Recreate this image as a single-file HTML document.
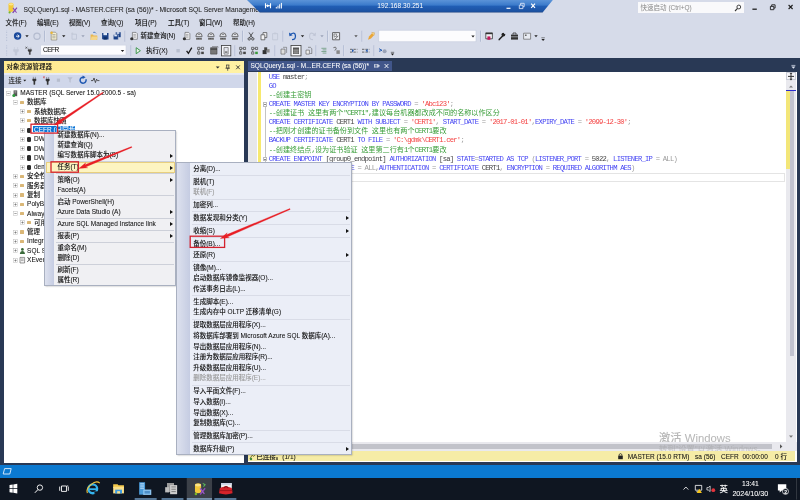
<!DOCTYPE html>
<html lang="zh-CN">
<head>
<meta charset="utf-8">
<title>SQLQuery1.sql - MASTER.CEFR (sa (56))* - Microsoft SQL Server Management Studio</title>
<style>
html,body{margin:0;padding:0}
body{width:800px;height:500px;overflow:hidden;background:#293955;position:relative;
 font-family:"Liberation Sans","Noto Sans CJK SC",sans-serif;font-size:6.5px;font-weight:500;color:#111}
div,span,svg{position:absolute;box-sizing:border-box}
#root{left:0;top:0;width:800px;height:500px;overflow:hidden;will-change:transform}
.t{white-space:nowrap;height:10px;line-height:10px;-webkit-text-stroke:0.06px}
.t span,.code span{position:static}
#chrome{left:0;top:0;width:800px;height:58px;background:#d6dbe9}
#oe{left:4px;top:61px;width:240px;height:401.5px;background:#fff}
#oehead{left:0;top:0;width:240px;height:11.5px;background:linear-gradient(90deg,#ffe98f,#fff09c 60%,#fff2a4)}
#oetb{left:0;top:11.5px;width:240px;height:15px;background:linear-gradient(180deg,#e6eaf5 0,#e6eaf5 1.4px,#d0d7ea 2.2px,#d0d7ea 100%)}
.tr{left:0;height:9.28px;width:240px}
.tr .t{top:-0.4px}
.fold{width:4px;height:3.2px;background:#dab777;border-radius:.5px}
.db{width:4.4px;height:5.2px;background:#2b2b2b;border-radius:1.6px/1px}
.menu{border:0.6px solid #a9b0c0;box-shadow:1.2px 1.2px 1.6px rgba(0,0,0,.28)}
.gut{left:0;top:0;bottom:0}
.ms{left:0;right:1px;height:0.7px;background:#d9dce7}
.arr{width:0;height:0;margin-top:-0.1px;margin-left:-0.8px;border-top:2.3px solid transparent;border-bottom:2.3px solid transparent;border-left:3px solid #111}
.dis{color:#9a9a9a}
.code{left:21.25px;white-space:pre;font-weight:400;font-family:"Liberation Mono","Noto Sans CJK SC",monospace;font-size:7.2px;letter-spacing:-0.765px;height:9.13px;line-height:9.13px;color:#222;opacity:.85}
.code .c{line-height:0;letter-spacing:0;font-size:7.11px;font-family:"Noto Sans CJK SC",sans-serif}
.k{color:#1c1cf0}.s{color:#f21a1a}.g{color:#8a8a8a}.cm{color:#168c16}
</style>
</head>
<body>
<div id="root">
<div id="chrome">
<svg style="left:6.5px;top:2px" width="11" height="12" viewBox="0 0 11 12"><path d="M1.5 2.2Q1.5.8 4 .8T6.5 2.2V8.6Q6.5 10 4 10T1.5 8.6Z" fill="#f2c83a"/><ellipse cx="4" cy="2.3" rx="2.5" ry="1.1" fill="#fbe38a"/><path d="M5.2 10.6 9.6 5.2 10.4 6 6.2 11.2Z" fill="#7d3fa8"/><path d="M6.4 5.6 10 10.4 9.2 11 5.6 6.4Z" fill="#8c4bb8"/><circle cx="2.6" cy="10.4" r="1.1" fill="#78b82a"/></svg>
<div class="t" style="left:23.6px;top:4.6px;font-size:6.72px;color:#1e1e1e">SQLQuery1.sql - MASTER.CEFR (sa (56))* - Microsoft SQL Server Management Studio</div>
<svg style="left:246px;top:0" width="312" height="14" viewBox="0 0 312 14"><defs><linearGradient id="rg" x1="0" y1="0" x2="0" y2="1"><stop offset="0" stop-color="#5b93d8"/><stop offset=".4" stop-color="#3b7bcb"/><stop offset=".5" stop-color="#215eb4"/><stop offset=".9" stop-color="#1c52a2"/><stop offset="1" stop-color="#1a3f7c"/></linearGradient></defs><path d="M1 0H306.8L296.6 12.6H13.8Z" fill="url(#rg)"/>
<path d="M19.5 3.2v5M24.5 3.2v5M19.5 5.7h5" stroke="#fff" stroke-width="1.1" fill="none"/><path d="M21 4.2l2.4 1.5L21 7.2Z" fill="#fff"/>
<path d="M30.3 8.5v-1.6M32 8.5v-2.8M33.7 8.5v-4.2M35.4 8.5v-5.6" stroke="#fff" stroke-width="1" fill="none"/>
<path d="M260.5 8.3h4" stroke="#fff" stroke-width="1.2"/><path d="M273.3 5.2h3.6v3.4h-3.6zM274.6 5v-1.7h3.6v3.4h-1.2" stroke="#e8eefb" stroke-width=".8" fill="none"/><path d="M285.2 3.6l3.8 4.2M289 3.6l-3.8 4.2" stroke="#fff" stroke-width="1.2"/>
<text x="131.3" y="8.2" font-family="Liberation Sans, sans-serif" font-size="6.6" fill="#fff">192.168.30.251</text></svg>
<div style="left:637.5px;top:2px;width:106.4px;height:11.2px;background:#f9f9fb"></div>
<div class="t" style="left:640.6px;top:2.7px;color:#8a8a8a;font-weight:400;-webkit-text-stroke:0">快速启动 (Ctrl+Q)</div>
<svg style="left:734px;top:3.5px" width="8" height="8" viewBox="0 0 8 8"><circle cx="4.8" cy="3" r="1.9" fill="none" stroke="#333" stroke-width=".9"/><path d="M3.5 4.4 1 7" stroke="#333" stroke-width="1.1"/></svg>
<svg style="left:750px;top:3px" width="46" height="10" viewBox="0 0 46 10"><path d="M2.4 6.2h4.4" stroke="#1e1e1e" stroke-width="1.3"/><path d="M20.4 3.4h3.4v3.3h-3.4zM21.7 3.2V1.8h3.4v3.3h-1.1" stroke="#1e1e1e" stroke-width=".9" fill="none"/><path d="M38.6 2l4 4M42.6 2l-4 4" stroke="#1e1e1e" stroke-width="1.1"/></svg>
<div class="t" style="left:5.4px;top:17.7px">文件(F)</div>
<div class="t" style="left:37px;top:17.7px">编辑(E)</div>
<div class="t" style="left:68.8px;top:17.7px">视图(V)</div>
<div class="t" style="left:101px;top:17.7px">查询(Q)</div>
<div class="t" style="left:135px;top:17.7px">项目(P)</div>
<div class="t" style="left:168px;top:17.7px">工具(T)</div>
<div class="t" style="left:199px;top:17.7px">窗口(W)</div>
<div class="t" style="left:233px;top:17.7px">帮助(H)</div>
<svg style="left:0;top:0" width="800" height="58" viewBox="0 0 800 58">
<path d="M6.6 30.70v11" stroke="#9aa6c4" stroke-width="1.2" stroke-dasharray=".6 1" opacity=".55"/>
<circle cx="17.6" cy="36.0" r="3.7" fill="#1b4a9c"/><path d="M16 36.2h3M17.6 34.6l1.7 1.6-1.7 1.6" stroke="#fff" stroke-width=".9" fill="none"/>
<path d="M25.30 35.30h3.4l-1.7 2z" fill="#222"/>
<circle cx="37" cy="36.2" r="3.1" fill="none" stroke="#b4bccf" stroke-width="1.2"/>
<path d="M44.5 30.70v11" stroke="#8d9abb" stroke-width=".7" opacity=".8"/><path d="M45.20 30.70v11" stroke="#fff" stroke-width=".5" opacity=".6"/>
<path d="M51.2 32.2h4.2l1.4 1.4v6.4h-5.6z" fill="#f6f1d6" stroke="#7b7665" stroke-width=".6"/><path d="M52.3 34.6h3.2M52.3 36.2h3.2M52.3 37.800000000000004h3.2" stroke="#6b6a60" stroke-width=".5"/><circle cx="51.6" cy="32.800000000000004" r="1.3" fill="#e9b535"/>
<path d="M62.05 35.30h3.4l-1.7 2z" fill="#222"/>
<path d="M72 34.2h4.5v5H72z" fill="none" stroke="#bcc3d4" stroke-width=".8"/><circle cx="72.3" cy="33.6" r="1.1" fill="#c5cbd9"/>
<path d="M81.30 35.30h3.4l-1.7 2z" fill="#9aa2b6"/>
<path d="M90.6 34.6h2.2l.8.9h3.6v4.4h-6.6z" fill="#e9b74e"/><path d="M91.6 36.6h6.2l-1.2 3.3h-6z" fill="#f5d68a"/><path d="M93.2 32.400000000000006q2-.8 2.8 1" stroke="#2a63b5" stroke-width=".8" fill="none"/>
<g transform="translate(.8 0)"><path d="M101.3 32.900000000000006h6.4v6.6h-5.6l-.8-.8z" fill="#1a4188"/><path d="M102.6 32.900000000000006h3.6v2.3h-3.6z" fill="#dfe8f6"/><path d="M103 37.2h3v2.3h-3z" fill="#0d2f66"/></g>
<g transform="translate(1.3 0)"><path d="M114.4 32.2h5v5h-5z" fill="#1a4188"/><path d="M115.4 32.2h2.6v1.6h-2.6z" fill="#dfe8f6"/><path d="M112 34.800000000000004h5v5h-4.3l-.7-.7z" fill="#1a4188" stroke="#d6dbe9" stroke-width=".5"/><path d="M113 34.800000000000004h2.6v1.6H113z" fill="#dfe8f6"/></g>
<path d="M125 30.70v11" stroke="#8d9abb" stroke-width=".7" opacity=".8"/><path d="M125.70 30.70v11" stroke="#fff" stroke-width=".5" opacity=".6"/>
<path d="M132.4 32.400000000000006h3.6l1.3 1.3v5.6h-4.9z" fill="#f4f4f6" stroke="#555" stroke-width=".6"/><path d="M133.3 34.400000000000006h2.6M133.3 35.800000000000004h2.6M133.3 37.2h2.6" stroke="#666" stroke-width=".5"/><ellipse cx="131.8" cy="38.800000000000004" rx="1.6" ry="1.5" fill="#333"/>
<path d="M185.0 32.400000000000006h3.6l1.3 1.3v5.6h-4.9z" fill="#f4f4f6" stroke="#555" stroke-width=".6"/><path d="M185.9 34.400000000000006h2.6M185.9 35.800000000000004h2.6M185.9 37.2h2.6" stroke="#666" stroke-width=".5"/><ellipse cx="184.4" cy="38.800000000000004" rx="1.6" ry="1.5" fill="#333"/>
<path d="M195.8 36.400000000000006q.2-3.6 3.2-3.6t3.2 3.6z" fill="#eef0f6" stroke="#4a4a4a" stroke-width=".75"/><path d="M197.7 34.400000000000006h2.6" stroke="#555" stroke-width=".7"/><path d="M196 37.6h6v2.2h-6z" fill="#8a8a8a"/><path d="M196.6 38.7h4.8" stroke="#3a3a3a" stroke-width=".9" stroke-dasharray="1 .5"/>
<path d="M207.8 36.400000000000006q.2-3.6 3.2-3.6t3.2 3.6z" fill="#eef0f6" stroke="#4a4a4a" stroke-width=".75"/><path d="M209.7 34.400000000000006h2.6" stroke="#555" stroke-width=".7"/><path d="M208 37.6h6v2.2h-6z" fill="#8a8a8a"/><path d="M208.6 38.7h4.8" stroke="#3a3a3a" stroke-width=".9" stroke-dasharray="1 .5"/>
<path d="M219.8 36.400000000000006q.2-3.6 3.2-3.6t3.2 3.6z" fill="#eef0f6" stroke="#4a4a4a" stroke-width=".75"/><path d="M221.7 34.400000000000006h2.6" stroke="#555" stroke-width=".7"/><path d="M220 37.6h6v2.2h-6z" fill="#8a8a8a"/><path d="M220.6 38.7h4.8" stroke="#3a3a3a" stroke-width=".9" stroke-dasharray="1 .5"/>
<path d="M231.8 36.400000000000006q.2-3.6 3.2-3.6t3.2 3.6z" fill="#eef0f6" stroke="#4a4a4a" stroke-width=".75"/><path d="M233.7 34.400000000000006h2.6" stroke="#555" stroke-width=".7"/><path d="M232 37.6h6v2.2h-6z" fill="#8a8a8a"/><path d="M232.6 38.7h4.8" stroke="#3a3a3a" stroke-width=".9" stroke-dasharray="1 .5"/>
<path d="M242.5 30.70v11" stroke="#8d9abb" stroke-width=".7" opacity=".8"/><path d="M243.20 30.70v11" stroke="#fff" stroke-width=".5" opacity=".6"/>
<path d="M249 32.400000000000006l3.6 5.6M253 32.400000000000006l-3.6 5.6" stroke="#333" stroke-width=".8"/><circle cx="249.2" cy="38.900000000000006" r="1.2" fill="none" stroke="#333" stroke-width=".8"/><circle cx="252.8" cy="38.900000000000006" r="1.2" fill="none" stroke="#333" stroke-width=".8"/>
<path d="M263 32.6h3.8v5h-3.8z" fill="#f4f4f6" stroke="#444" stroke-width=".7"/><path d="M261 34.800000000000004h3.8v5H261z" fill="#f4f4f6" stroke="#444" stroke-width=".7"/>
<path d="M272.6 33.6h5v6.2h-5z" fill="none" stroke="#bfc5d4" stroke-width=".8"/><path d="M274 32.6h2.2v1.6H274z" fill="#c5cbd9"/>
<path d="M283 30.70v11" stroke="#8d9abb" stroke-width=".7" opacity=".8"/><path d="M283.70 30.70v11" stroke="#fff" stroke-width=".5" opacity=".6"/>
<path d="M290.2 34.6q4.6-3.4 5.2 .8t-3.4 4.2" fill="none" stroke="#1e57b0" stroke-width="1.3"/><path d="M289 32.6l.4 3.6 3.3-.9z" fill="#1e57b0"/>
<path d="M300.80 35.30h3.4l-1.7 2z" fill="#222"/>
<path d="M314.8 34.6q-4.6-3.4-5.2 .8t3.4 4.2" fill="none" stroke="#c0c6d6" stroke-width="1.1"/><path d="M316 32.6l-.4 3.6-3.3-.9z" fill="#c0c6d6"/>
<path d="M320.30 35.30h3.4l-1.7 2z" fill="#9aa2b6"/>
<path d="M327.5 30.70v11" stroke="#8d9abb" stroke-width=".7" opacity=".8"/><path d="M328.20 30.70v11" stroke="#fff" stroke-width=".5" opacity=".6"/>
<path d="M332.6 32.6h7v7.2h-7z" fill="#eceef4" stroke="#444" stroke-width=".8"/><path d="M334 34.0h2.6v2.4H334z" fill="none" stroke="#555" stroke-width=".6"/><path d="M334.4 37.6l1.2 1.2 2.6-3" fill="none" stroke="#444" stroke-width=".7"/>
<path d="M354.30 35.30h3.4l-1.7 2z" fill="#555"/>
<path d="M362 30.70v11" stroke="#8d9abb" stroke-width=".7" opacity=".8"/><path d="M362.70 30.70v11" stroke="#fff" stroke-width=".5" opacity=".6"/>
<path d="M368 39.800000000000004l1-3.4 3.4-3.6 2 2-3.4 3.6z" fill="#e9a63a"/><path d="M371.5 32.400000000000006l3 .4-.6 2.8" fill="#f5d68a" stroke="#c98a26" stroke-width=".4"/>
<rect x="378.8" y="30.200000000000003" width="97.2" height="11.6" fill="#fcfcfe" stroke="#c4cbdc" stroke-width=".6"/>
<path d="M471.30 35.50h3.4l-1.7 2z" fill="#222"/>
<path d="M480.5 30.70v11" stroke="#8d9abb" stroke-width=".7" opacity=".8"/><path d="M481.20 30.70v11" stroke="#fff" stroke-width=".5" opacity=".6"/>
<path d="M485.8 32.800000000000004h6.6v6h-6.6z" fill="#f2f2f5" stroke="#333" stroke-width=".8"/><path d="M485.8 33.6h6.6" stroke="#333" stroke-width="1.2"/><path d="M487.4 36.400000000000006h3v3.4h-3z" fill="#c2185b"/>
<path d="M499.2 39.6l3.4-3.6" stroke="#222" stroke-width="1.5" stroke-linecap="round"/><circle cx="503.4" cy="34.6" r="1.9" fill="#222"/><path d="M503.6 32.6l1.8 1.4" stroke="#d6dbe9" stroke-width="1"/>
<path d="M511 34.6h7v5h-7z" fill="#333"/><path d="M513 34.6v-1.6h3v1.6" fill="none" stroke="#333" stroke-width=".8"/><path d="M511 36.800000000000004h7" stroke="#d6dbe9" stroke-width=".6"/>
<path d="M523.6 33.2h7v6h-7z" fill="#e8ebf2" stroke="#666" stroke-width=".7"/><path d="M525 34.6h1.6v1.4H525z" fill="#666"/>
<path d="M534.30 35.30h3.4l-1.7 2z" fill="#222"/>
<path d="M541.4 37.800000000000004h3.4" stroke="#333" stroke-width=".6"/><path d="M541.40 38.90h3.4l-1.7 2z" fill="#222"/>
<path d="M6.6 45.20v11" stroke="#9aa6c4" stroke-width="1.2" stroke-dasharray=".6 1" opacity=".55"/>
<path d="M14.4 47.1v2.4M17.6 47.1v2.4M13.6 49.5h4.8v1.6l-1.6 1.6v2.4h-1.6v-2.4l-1.6-1.6z" fill="#c3c9d8" stroke="#c3c9d8" stroke-width=".6"/>
<path d="M28.8 47.7v2M30.8 47.7v2M28 49.5h3.6v1.4l-1.2 1.2v2.4h-1.2v-2.4l-1.2-1.2z" fill="#3a3a3a" stroke="#3a3a3a" stroke-width=".3"/><path d="M25.4 46.900000000000006l2 1.6M25.4 48.5l2-1.6" stroke="#333" stroke-width=".6"/>
<rect x="40.8" y="45.1" width="85.2" height="9.9" fill="#fcfcfe" stroke="#c9cfdf" stroke-width=".5"/>
<path d="M120.80 50.00h3.4l-1.7 2z" fill="#222"/>
<path d="M131 45.20v11" stroke="#8d9abb" stroke-width=".7" opacity=".8"/><path d="M131.70 45.20v11" stroke="#fff" stroke-width=".5" opacity=".6"/>
<path d="M136.2 47.7l4.2 3-4.2 3z" fill="#eaf4e6" stroke="#2f8f3f" stroke-width=".9" stroke-linejoin="round"/>
<rect x="176.4" y="49.0" width="3.4" height="3.4" fill="#b9c0d0"/>
<path d="M186.6 50.900000000000006l1.8 2.4 3.4-5.6" fill="none" stroke="#1b1b1b" stroke-width="1.3"/>
<path d="M197.6 47.300000000000004h2.2v2.2h-2.2zM201.4 47.300000000000004h2.2v2.2H201.4zM197.6 51.900000000000006h2.2v2.2h-2.2z" fill="none" stroke="#444" stroke-width=".7"/><path d="M199.79999999999998 48.400000000000006h1.6M198.7 49.5v2.4" stroke="#444" stroke-width=".6"/><path d="M201.2 51.7h2.6v2.4H201.2z" fill="#444"/>
<path d="M210.6 47.7h6.4v6.4h-6.4z" fill="#777" stroke="#444" stroke-width=".6"/><path d="M210.6 49.1h6.4" stroke="#333" stroke-width="1"/><path d="M212 46.7h6v1" stroke="#555" stroke-width=".6" fill="none"/>
<rect x="221.4" y="45.5" width="9.4" height="10.4" fill="#f6f7fb" stroke="#3a3a3a" stroke-width=".8"/><path d="M224 47.5h4.2v6.6H224z" fill="#e4e6ee" stroke="#555" stroke-width=".6"/><path d="M224.8 51.300000000000004h2.6v1.6h-2.6z" fill="#777"/>
<path d="M235 45.20v11" stroke="#8d9abb" stroke-width=".7" opacity=".8"/><path d="M235.70 45.20v11" stroke="#fff" stroke-width=".5" opacity=".6"/>
<path d="M239.6 47.300000000000004h2.2v2.2h-2.2zM243.4 47.300000000000004h2.2v2.2H243.4zM239.6 51.900000000000006h2.2v2.2h-2.2z" fill="none" stroke="#444" stroke-width=".7"/><path d="M241.79999999999998 48.400000000000006h1.6M240.7 49.5v2.4" stroke="#444" stroke-width=".6"/><path d="M243.2 51.7h2.6v2.4H243.2z" fill="#444"/>
<path d="M251.6 47.300000000000004h2.2v2.2h-2.2zM255.4 47.300000000000004h2.2v2.2H255.4zM251.6 51.900000000000006h2.2v2.2h-2.2z" fill="none" stroke="#444" stroke-width=".7"/><path d="M253.79999999999998 48.400000000000006h1.6M252.7 49.5v2.4" stroke="#444" stroke-width=".6"/><path d="M255.2 51.7h2.6v2.4H255.2z" fill="#3a9a3a"/>
<path d="M264.2 47.300000000000004h3v3h-3z" fill="#444"/><path d="M262.6 50.1h4v4h-4z" fill="#333"/><path d="M267 49.1h2.6v3.4H267z" fill="#888"/>
<path d="M275 45.20v11" stroke="#8d9abb" stroke-width=".7" opacity=".8"/><path d="M275.70 45.20v11" stroke="#fff" stroke-width=".5" opacity=".6"/>
<path d="M281 49.1h4v5h-4z" fill="#ddd" stroke="#555" stroke-width=".6"/><path d="M283 47.300000000000004h3.6v5.6" fill="none" stroke="#666" stroke-width=".6"/>
<rect x="291" y="45.5" width="10" height="10.4" fill="#f6f7fb" stroke="#3a3a3a" stroke-width=".8"/><path d="M293 47.5h6v6.4h-6z" fill="#555"/><path d="M293 50.1h6M293 52.1h6M295 49.300000000000004v4.6M297 49.300000000000004v4.6" stroke="#ddd" stroke-width=".4"/>
<path d="M306 50.1h3.4v4H306z" fill="#eee" stroke="#555" stroke-width=".6"/><path d="M308 47.300000000000004h2.4l1.4 1.4v4.8h-1.6" fill="none" stroke="#555" stroke-width=".6"/>
<path d="M316 45.20v11" stroke="#8d9abb" stroke-width=".7" opacity=".8"/><path d="M316.70 45.20v11" stroke="#fff" stroke-width=".5" opacity=".6"/>
<path d="M321.4 48.300000000000004h5M322.6 49.900000000000006h3.8M321.4 51.5h5M322.6 53.1h3.8" stroke="#6c9a7c" stroke-width=".8"/>
<path d="M333.4 47.7q2.6-1.4 2.8.4t-1.6 2.2" fill="none" stroke="#555" stroke-width=".8"/><path d="M336.4 50.300000000000004h3.4v3.6h-3.4z" fill="#888"/>
<path d="M343.8 45.20v11" stroke="#8d9abb" stroke-width=".7" opacity=".8"/><path d="M344.50 45.20v11" stroke="#fff" stroke-width=".5" opacity=".6"/>
<path d="M350 49.300000000000004h7.4M350 52.1h7.4" stroke="#333" stroke-width=".7" stroke-dasharray="2.4 1"/><path d="M352 49.1l2 1.6-2 1.6z" fill="#1e57b0"/>
<path d="M362 49.300000000000004h7.4M362 52.1h7.4" stroke="#333" stroke-width=".7" stroke-dasharray="2.4 1"/><path d="M367.6 49.1l-2 1.6 2 1.6z" fill="#1e57b0"/>
<path d="M374 45.20v11" stroke="#8d9abb" stroke-width=".7" opacity=".8"/><path d="M374.70 45.20v11" stroke="#fff" stroke-width=".5" opacity=".6"/>
<path d="M379 48.7l3 1.6M379 51.300000000000004l3-1" stroke="#1e57b0" stroke-width=".9"/><circle cx="384.6" cy="51.300000000000004" r="2" fill="#9aa3b8"/>
<path d="M390.8 52.300000000000004h3.4" stroke="#333" stroke-width=".6"/><path d="M390.80 53.40h3.4l-1.7 2z" fill="#222"/>
</svg>
<div class="t" style="left:140.4px;top:31.10px">新建查询(N)</div>
<div class="t" style="left:43px;top:45.30px;font-size:6.5px;letter-spacing:-.5px">CEFR</div>
<div class="t" style="left:146px;top:45.60px">执行(X)</div>
</div>
<div id="oe">
<div id="oehead"><div class="t" style="left:2.4px;top:1px">对象资源管理器</div>
<svg style="left:208.4px;top:1.6px" width="30" height="9" viewBox="0 0 30 9"><path d="M3.8 3.4h3.8l-1.9 2.2z" fill="#333"/><path d="M14 2h3.4M14.6 2v3.2h2.2V2M13.4 5.2h4.6M15.7 5.2v2.6" stroke="#333" stroke-width=".7" fill="none"/><path d="M24.2 2.4l3.6 3.8M27.8 2.4l-3.6 3.8" stroke="#333" stroke-width=".9"/></svg></div>
<div id="oetb"><div class="t" style="left:4.6px;top:3.3px;color:#2a2a2a">连接</div>
<svg style="left:0;top:0.9px" width="240" height="14.4" viewBox="0 0 240 14.4">
<path d="M19.2 6.8h3l-1.5 1.8z" fill="#222"/>
<path d="M29.3 3.8000000000000003v2.2M31.3 3.8000000000000003v2.2M28.6 5.9h3.4v1.5l-1.1 1.2v2.8h-1.2v-2.8l-1.1-1.2z" fill="#333" stroke="#333" stroke-width=".4"/>
<path d="M42.6 4.0v2.2M44.6 4.0v2.2M41.9 6.1h3.4v1.5l-1.1 1.2v2.8h-1.2v-2.8l-1.1-1.2z" fill="#333" stroke="#333" stroke-width=".4"/><path d="M39 3.4000000000000004l1.8 1.7M39 5.1l1.8-1.7" stroke="#c33" stroke-width=".6"/>
<rect x="52.8" y="5.6" width="3.2" height="3.2" fill="#b7bece"/>
<path d="M63.4 4.2h5.2l-2 2.6v3l-1.2-.8v-2.2z" fill="#b7bece"/>
<path d="M81.9 6.2a3 3 0 1 1-2.6-2" fill="none" stroke="#1e57b0" stroke-width="1.45"/><path d="M78.6 2.4000000000000004l3 1.9-3 1.8z" fill="#1e57b0"/>
<path d="M87 7.6000000000000005h2l1-2.6 1.4 4.6 1.2-3.4.8 1.4h2" fill="none" stroke="#333" stroke-width=".8"/>
</svg></div>
<div class="tr" style="top:27.36px">
<svg style="left:1.5px;top:2.15px" width="5" height="5" viewBox="0 0 5 5"><rect x=".5" y=".5" width="4" height="4" fill="#fff" stroke="#c2c2c2" stroke-width=".55"/><path d="M1.3 2.5h2.4" stroke="#5a5a5a" stroke-width=".55"/></svg>
<svg style="left:8.0px;top:1px" width="7" height="8" viewBox="0 0 7 8"><path d="M1.6 1.4h3.6v5.8H1.6z" fill="#555"/><path d="M2.4 2.6h2M2.4 3.8h2" stroke="#ddd" stroke-width=".5"/><circle cx="1.8" cy="6.4" r="1.5" fill="#2c9a3c"/></svg>
<div class="t" style="left:16.3px">MASTER (SQL Server 15.0.2000.5 - sa)</div>
</div>
<div class="tr" style="top:36.64px">
<svg style="left:8.5px;top:2.15px" width="5" height="5" viewBox="0 0 5 5"><rect x=".5" y=".5" width="4" height="4" fill="#fff" stroke="#c2c2c2" stroke-width=".55"/><path d="M1.3 2.5h2.4" stroke="#5a5a5a" stroke-width=".55"/></svg>
<div class="fold" style="left:15.7px;top:2.9px"></div>
<div class="t" style="left:23.1px">数据库</div>
</div>
<div class="tr" style="top:45.92px">
<svg style="left:15.5px;top:2.15px" width="5" height="5" viewBox="0 0 5 5"><rect x=".5" y=".5" width="4" height="4" fill="#fff" stroke="#c2c2c2" stroke-width=".55"/><path d="M1.3 2.5h2.4" stroke="#5a5a5a" stroke-width=".55"/><path d="M2.5 1.3v2.4" stroke="#5a5a5a" stroke-width=".55"/></svg>
<div class="fold" style="left:22.7px;top:2.9px"></div>
<div class="t" style="left:30.0px">系统数据库</div>
</div>
<div class="tr" style="top:55.20px">
<svg style="left:15.5px;top:2.15px" width="5" height="5" viewBox="0 0 5 5"><rect x=".5" y=".5" width="4" height="4" fill="#fff" stroke="#c2c2c2" stroke-width=".55"/><path d="M1.3 2.5h2.4" stroke="#5a5a5a" stroke-width=".55"/><path d="M2.5 1.3v2.4" stroke="#5a5a5a" stroke-width=".55"/></svg>
<div class="fold" style="left:22.7px;top:2.9px"></div>
<div class="t" style="left:30.0px">数据库快照</div>
</div>
<div class="tr" style="top:64.48px">
<svg style="left:15.5px;top:2.15px" width="5" height="5" viewBox="0 0 5 5"><rect x=".5" y=".5" width="4" height="4" fill="#fff" stroke="#c2c2c2" stroke-width=".55"/><path d="M1.3 2.5h2.4" stroke="#5a5a5a" stroke-width=".55"/><path d="M2.5 1.3v2.4" stroke="#5a5a5a" stroke-width=".55"/></svg>
<div class="db" style="left:22.8px;top:2.1px"></div>
<div style="left:28.8px;top:0.1px;width:42.2px;height:6.4px;background:#0a74d6"></div>
<div class="t" style="left:30.0px;color:#fff">CEFR (已同步)</div>
</div>
<div class="tr" style="top:73.76px">
<svg style="left:15.5px;top:2.15px" width="5" height="5" viewBox="0 0 5 5"><rect x=".5" y=".5" width="4" height="4" fill="#fff" stroke="#c2c2c2" stroke-width=".55"/><path d="M1.3 2.5h2.4" stroke="#5a5a5a" stroke-width=".55"/><path d="M2.5 1.3v2.4" stroke="#5a5a5a" stroke-width=".55"/></svg>
<div class="db" style="left:22.8px;top:2.1px"></div>
<div class="t" style="left:30.0px">DWConfiguration</div>
</div>
<div class="tr" style="top:83.04px">
<svg style="left:15.5px;top:2.15px" width="5" height="5" viewBox="0 0 5 5"><rect x=".5" y=".5" width="4" height="4" fill="#fff" stroke="#c2c2c2" stroke-width=".55"/><path d="M1.3 2.5h2.4" stroke="#5a5a5a" stroke-width=".55"/><path d="M2.5 1.3v2.4" stroke="#5a5a5a" stroke-width=".55"/></svg>
<div class="db" style="left:22.8px;top:2.1px"></div>
<div class="t" style="left:30.0px">DWDiagnostics</div>
</div>
<div class="tr" style="top:92.32px">
<svg style="left:15.5px;top:2.15px" width="5" height="5" viewBox="0 0 5 5"><rect x=".5" y=".5" width="4" height="4" fill="#fff" stroke="#c2c2c2" stroke-width=".55"/><path d="M1.3 2.5h2.4" stroke="#5a5a5a" stroke-width=".55"/><path d="M2.5 1.3v2.4" stroke="#5a5a5a" stroke-width=".55"/></svg>
<div class="db" style="left:22.8px;top:2.1px"></div>
<div class="t" style="left:30.0px">DWQueue</div>
</div>
<div class="tr" style="top:101.60px">
<svg style="left:15.5px;top:2.15px" width="5" height="5" viewBox="0 0 5 5"><rect x=".5" y=".5" width="4" height="4" fill="#fff" stroke="#c2c2c2" stroke-width=".55"/><path d="M1.3 2.5h2.4" stroke="#5a5a5a" stroke-width=".55"/><path d="M2.5 1.3v2.4" stroke="#5a5a5a" stroke-width=".55"/></svg>
<div class="db" style="left:22.8px;top:2.1px"></div>
<div class="t" style="left:30.0px">demo</div>
</div>
<div class="tr" style="top:110.88px">
<svg style="left:8.5px;top:2.15px" width="5" height="5" viewBox="0 0 5 5"><rect x=".5" y=".5" width="4" height="4" fill="#fff" stroke="#c2c2c2" stroke-width=".55"/><path d="M1.3 2.5h2.4" stroke="#5a5a5a" stroke-width=".55"/><path d="M2.5 1.3v2.4" stroke="#5a5a5a" stroke-width=".55"/></svg>
<div class="fold" style="left:15.7px;top:2.9px"></div>
<div class="t" style="left:23.1px">安全性</div>
</div>
<div class="tr" style="top:120.16px">
<svg style="left:8.5px;top:2.15px" width="5" height="5" viewBox="0 0 5 5"><rect x=".5" y=".5" width="4" height="4" fill="#fff" stroke="#c2c2c2" stroke-width=".55"/><path d="M1.3 2.5h2.4" stroke="#5a5a5a" stroke-width=".55"/><path d="M2.5 1.3v2.4" stroke="#5a5a5a" stroke-width=".55"/></svg>
<div class="fold" style="left:15.7px;top:2.9px"></div>
<div class="t" style="left:23.1px">服务器对象</div>
</div>
<div class="tr" style="top:129.44px">
<svg style="left:8.5px;top:2.15px" width="5" height="5" viewBox="0 0 5 5"><rect x=".5" y=".5" width="4" height="4" fill="#fff" stroke="#c2c2c2" stroke-width=".55"/><path d="M1.3 2.5h2.4" stroke="#5a5a5a" stroke-width=".55"/><path d="M2.5 1.3v2.4" stroke="#5a5a5a" stroke-width=".55"/></svg>
<div class="fold" style="left:15.7px;top:2.9px"></div>
<div class="t" style="left:23.1px">复制</div>
</div>
<div class="tr" style="top:138.72px">
<svg style="left:8.5px;top:2.15px" width="5" height="5" viewBox="0 0 5 5"><rect x=".5" y=".5" width="4" height="4" fill="#fff" stroke="#c2c2c2" stroke-width=".55"/><path d="M1.3 2.5h2.4" stroke="#5a5a5a" stroke-width=".55"/><path d="M2.5 1.3v2.4" stroke="#5a5a5a" stroke-width=".55"/></svg>
<div class="fold" style="left:15.7px;top:2.9px"></div>
<div class="t" style="left:23.1px">PolyBase</div>
</div>
<div class="tr" style="top:148.00px">
<svg style="left:8.5px;top:2.15px" width="5" height="5" viewBox="0 0 5 5"><rect x=".5" y=".5" width="4" height="4" fill="#fff" stroke="#c2c2c2" stroke-width=".55"/><path d="M1.3 2.5h2.4" stroke="#5a5a5a" stroke-width=".55"/></svg>
<div class="fold" style="left:15.7px;top:2.9px"></div>
<div class="t" style="left:23.1px">Always On 高可用性</div>
</div>
<div class="tr" style="top:157.28px">
<svg style="left:15.5px;top:2.15px" width="5" height="5" viewBox="0 0 5 5"><rect x=".5" y=".5" width="4" height="4" fill="#fff" stroke="#c2c2c2" stroke-width=".55"/><path d="M1.3 2.5h2.4" stroke="#5a5a5a" stroke-width=".55"/><path d="M2.5 1.3v2.4" stroke="#5a5a5a" stroke-width=".55"/></svg>
<div class="fold" style="left:22.7px;top:2.9px"></div>
<div class="t" style="left:30.0px">可用性组</div>
</div>
<div class="tr" style="top:166.56px">
<svg style="left:8.5px;top:2.15px" width="5" height="5" viewBox="0 0 5 5"><rect x=".5" y=".5" width="4" height="4" fill="#fff" stroke="#c2c2c2" stroke-width=".55"/><path d="M1.3 2.5h2.4" stroke="#5a5a5a" stroke-width=".55"/><path d="M2.5 1.3v2.4" stroke="#5a5a5a" stroke-width=".55"/></svg>
<div class="fold" style="left:15.7px;top:2.9px"></div>
<div class="t" style="left:23.1px">管理</div>
</div>
<div class="tr" style="top:175.84px">
<svg style="left:8.5px;top:2.15px" width="5" height="5" viewBox="0 0 5 5"><rect x=".5" y=".5" width="4" height="4" fill="#fff" stroke="#c2c2c2" stroke-width=".55"/><path d="M1.3 2.5h2.4" stroke="#5a5a5a" stroke-width=".55"/><path d="M2.5 1.3v2.4" stroke="#5a5a5a" stroke-width=".55"/></svg>
<div class="fold" style="left:15.7px;top:2.9px"></div>
<div class="t" style="left:23.1px">Integration Services 目录</div>
</div>
<div class="tr" style="top:185.12px">
<svg style="left:8.5px;top:2.15px" width="5" height="5" viewBox="0 0 5 5"><rect x=".5" y=".5" width="4" height="4" fill="#fff" stroke="#c2c2c2" stroke-width=".55"/><path d="M1.3 2.5h2.4" stroke="#5a5a5a" stroke-width=".55"/><path d="M2.5 1.3v2.4" stroke="#5a5a5a" stroke-width=".55"/></svg>
<svg style="left:15.0px;top:1px" width="7" height="8" viewBox="0 0 7 8"><circle cx="3.4" cy="2.4" r="1.4" fill="#3a6a3a"/><path d="M.8 7q.4-3 2.6-3t2.6 3z" fill="#3a6a3a"/></svg>
<div class="t" style="left:23.1px">SQL Server 代理</div>
</div>
<div class="tr" style="top:194.40px">
<svg style="left:8.5px;top:2.15px" width="5" height="5" viewBox="0 0 5 5"><rect x=".5" y=".5" width="4" height="4" fill="#fff" stroke="#c2c2c2" stroke-width=".55"/><path d="M1.3 2.5h2.4" stroke="#5a5a5a" stroke-width=".55"/><path d="M2.5 1.3v2.4" stroke="#5a5a5a" stroke-width=".55"/></svg>
<svg style="left:15.0px;top:1px" width="7" height="8" viewBox="0 0 7 8"><path d="M1 1.4h4.6v5.6H1z" fill="#f2f2f2" stroke="#555" stroke-width=".6"/><path d="M2 3h2.6M2 4.4h2.6" stroke="#666" stroke-width=".5"/></svg>
<div class="t" style="left:23.1px">XEvent 探查器</div>
</div>
</div>
<div style="left:247.6px;top:61.25px;width:144px;height:9.9px;background:#41568a"></div>
<div class="t" style="left:250.5px;top:61px;color:#fff">SQLQuery1.sql - M...ER.CEFR (sa (56))*</div>
<svg style="left:370.6px;top:62.1px" width="22" height="8" viewBox="0 0 22 8"><path d="M3.6 2.2v3.4M3.6 2.8h3.4v2.2H3.6M7 2.2v3.4M7 3.9h2" stroke="#fff" stroke-width=".7" fill="none"/><path d="M13.6 2l3.8 4M17.4 2l-3.8 4" stroke="#fff" stroke-width=".9"/></svg>
<svg style="left:789px;top:63px" width="9" height="8" viewBox="0 0 9 8"><path d="M2.4 2.4h4" stroke="#dfe5f2" stroke-width=".7"/><path d="M2.4 3.6h4l-2 2.2z" fill="#dfe5f2"/></svg>
<div id="ed" style="left:247.5px;top:72.3px;width:549px;height:390.20px;background:#fff;overflow:hidden">
<div style="left:0;top:0;width:9.9px;height:369.50px;background:#e6e7ea"></div>
<div style="left:10.3px;top:0;width:3px;height:101.17px;background:#f7e96e"></div>
<div style="left:16.5px;top:100.87px;width:521px;height:9px;border:0.7px solid #e4e4e4"></div>
<div style="left:17.05px;top:33.62px;width:.5px;height:63.91px;background:#c4c4c4"></div>
<div style="left:15.2px;top:30.02px;width:4.2px;height:4.2px;border:0.5px solid #bdbdbd;background:#fff"></div><div style="left:16.2px;top:31.87px;width:2.2px;height:0.5px;background:#8a8a8a"></div>
<div style="left:15.2px;top:84.81px;width:4.2px;height:4.2px;border:0.5px solid #bdbdbd;background:#fff"></div><div style="left:16.2px;top:86.66px;width:2.2px;height:0.5px;background:#8a8a8a"></div>
<div class="code" style="top:0.23px"><span class="k">USE</span> master<span class="g">;</span></div>
<div class="code" style="top:9.36px"><span class="k">GO</span></div>
<div class="code" style="top:18.49px"><span class="cm">--<span class="c">创建主密钥</span></span></div>
<div class="code" style="top:27.62px"><span class="k">CREATE MASTER KEY ENCRYPTION BY PASSWORD</span> <span class="g">=</span> <span class="s">'Abc123'</span><span class="g">;</span></div>
<div class="code" style="top:36.76px"><span class="cm">--<span class="c">创建证书</span> <span class="c">这里有两个</span>"CERT1",<span class="c">建议每台机器都改成不同的名称以作区分</span></span></div>
<div class="code" style="top:45.89px"><span class="k">CREATE CERTIFICATE</span> CERT1 <span class="k">WITH SUBJECT</span> <span class="g">=</span> <span class="s">'CERT1'</span><span class="g">,</span> <span class="k">START_DATE</span> <span class="g">=</span> <span class="s">'2017-01-01'</span><span class="g">,</span><span class="k">EXPIRY_DATE</span> <span class="g">=</span> <span class="s">'2099-12-30'</span><span class="g">;</span></div>
<div class="code" style="top:55.02px"><span class="cm">--<span class="c">把刚才创建的证书备份到文件</span> <span class="c">这里也有两个</span>CERT1<span class="c">要改</span></span></div>
<div class="code" style="top:64.14px"><span class="k">BACKUP CERTIFICATE</span> CERT1 <span class="k">TO FILE</span> <span class="g">=</span> <span class="s">'C:\gdmk\CERT1.cer'</span><span class="g">;</span></div>
<div class="code" style="top:73.28px"><span class="cm">--<span class="c">创建终结点</span>,<span class="c">设为证书验证</span> <span class="c">这里第二行有</span>1<span class="c">个</span>CERT1<span class="c">要改</span></span></div>
<div class="code" style="top:82.41px"><span class="k">CREATE ENDPOINT</span> [group0_endpoint] <span class="k">AUTHORIZATION</span> [sa] <span class="k">STATE</span><span class="g">=</span><span class="k">STARTED AS TCP</span> <span class="g">(</span><span class="k">LISTENER_PORT</span> <span class="g">=</span> 5022<span class="g">,</span> <span class="k">LISTENER_IP</span> <span class="g">= ALL)</span></div>
<div class="code" style="top:91.54px"><span class="k">FOR DATA_MIRRORING</span> <span class="g">(</span><span class="k">ROLE</span> <span class="g">= ALL,</span><span class="k">AUTHENTICATION</span> <span class="g">=</span> <span class="k">CERTIFICATE</span> CERT1<span class="g">,</span> <span class="k">ENCRYPTION</span> <span class="g">=</span> <span class="k">REQUIRED ALGORITHM AES</span><span class="g">)</span></div>
<div class="t" style="left:411.5px;top:358.70px;height:14px;line-height:14px;font-size:11.3px;color:#b8b8b8">激活 Windows</div>
<div style="left:538.2px;top:0;width:10.8px;height:369.50px;background:#e9e9ee"></div>
<div style="left:538.6px;top:0px;width:10px;height:8px;background:#f4f4f8;border:0.6px solid #c9ccd6"></div>
<svg style="left:538.6px;top:-0.4px" width="10" height="9" viewBox="0 0 10 9"><path d="M5 1.2v6.4M2 4.4h6" stroke="#333" stroke-width="1"/><path d="M5 .4l1.4 1.6H3.6zM5 8.4l1.4-1.6H3.6z" fill="#333"/></svg>
<svg style="left:538.6px;top:10.70px" width="10" height="7" viewBox="0 0 10 7"><path d="M3 4.6h4L5 2.4z" fill="#777"/></svg>
<div style="left:538.4px;top:17.90px;width:10.4px;height:1px;background:#2a2ad0"></div>
<div style="left:538.8px;top:19.10px;width:3.3px;height:77.60px;background:#f3e679"></div>
<div style="left:542.2px;top:19.10px;width:4.4px;height:264.20px;background:#c2c3d0"></div>
<svg style="left:538.6px;top:360.90px" width="10" height="7" viewBox="0 0 10 7"><path d="M3 2.4h4L5 4.8z" fill="#777"/></svg>
<div style="left:0;top:369.50px;width:549px;height:9.20px;background:#e9e9ee"></div>
<div style="left:14px;top:372.00px;width:510.5px;height:4.4px;background:#c2c3ca"></div>
<svg style="left:529.6px;top:370.80px" width="8" height="7" viewBox="0 0 8 7"><path d="M3 1.3v4.2L5.4 3.4z" fill="#555"/></svg>
<div class="t" style="left:411.5px;top:372.30px;font-size:8.2px;color:#9a9a9a;opacity:.4">转到"设置"以激活 Windows。</div>
<div style="left:0;top:378.70px;width:547.6px;height:10px;background:#f6eca6"></div>
<svg style="left:1px;top:380.60px" width="8" height="8" viewBox="0 0 8 8"><path d="M1 5.6l2.2-3.4 1.4 1.2L6.8 1" stroke="#6b6b2a" stroke-width=".9" fill="none"/><circle cx="2" cy="6" r="1.2" fill="#3c8a3c"/></svg>
<div class="t" style="left:8.8px;top:379.60px">已连接。(1/1)</div>
<svg style="left:369px;top:380.20px" width="7" height="8" viewBox="0 0 7 8"><path d="M1.2 3.6h4.6v3.6H1.2z" fill="#222"/><path d="M2.2 3.6V2.4q1.3-1.6 2.6 0v1.2" stroke="#222" stroke-width=".8" fill="none"/></svg>
<div class="t" style="left:380.2px;top:379.60px">MASTER (15.0 RTM)</div>
<div class="t" style="left:447.6px;top:379.60px">sa (56)</div>
<div class="t" style="left:473.6px;top:379.60px">CEFR</div>
<div class="t" style="left:495px;top:379.60px">00:00:00</div>
<div class="t" style="left:527.6px;top:379.60px">0 行</div>
</div>
<div style="left:0;top:465.2px;width:800px;height:13.2px;background:#0b79d0"></div>
<svg style="left:2px;top:467px" width="12" height="9" viewBox="0 0 12 9"><path d="M2.6 1.6h6.6l-1.4 5.4H1.2z" fill="none" stroke="#cfe6fb" stroke-width="1"/></svg>
<div style="left:0;top:478.4px;width:800px;height:21.6px;background:#0f1621"></div>
<svg style="left:0;top:478.4px" width="800" height="21.6" viewBox="0 0 800 21.6">
<path d="M9.4 7.0l3.2-.5v3.8H9.4zM13.2 6.3999999999999995l4-.6v4.5h-4zM9.4 10.9h3.2v3.8l-3.2-.5zM13.2 10.9h4v4.5l-4-.6z" fill="#fff"/>
<circle cx="39.8" cy="9.6" r="2.7" fill="none" stroke="#fff" stroke-width=".9"/><path d="M37.8 11.6l-3 3.2" stroke="#fff" stroke-width="1"/>
<path d="M61.4 8.0h5v5.4h-5z" fill="none" stroke="#fff" stroke-width=".9"/><path d="M59.6 8.6v4.2M68.2 8.6v4.2" stroke="#fff" stroke-width=".9"/><path d="M67.6 7.199999999999999v1.4" stroke="#fff" stroke-width=".7"/>
<g transform="translate(92.4 11.2) scale(1.22) translate(-92.4 -11.2)"><circle cx="92.6" cy="10.9" r="3.6" fill="none" stroke="#35b5ee" stroke-width="1.9"/><path d="M89.6 11.2h6.6" stroke="#35b5ee" stroke-width="1.5"/><path d="M94 13.0h3.4v2H94z" fill="#0f1621"/><path d="M88.2 14.399999999999999q-1.4-3.4 3-7t7.2-1.2" fill="none" stroke="#f4c63a" stroke-width=".9"/></g>
<g transform="translate(118.6 11.0) scale(1.1) translate(-118.6 -11.0)"><path d="M113.6 6.6h4l.8 1h5v2.4h-9.8z" fill="#f5c94a"/><path d="M113.6 9.0h9.8v6h-9.8z" fill="#fbe08a"/><path d="M115.4 11.6h6.2v3.4h-6.2z" fill="#3f9be0"/><path d="M117.2 13.0h2.6v2h-2.6z" fill="#fbe08a"/></g>
<g transform="translate(145 11.0) scale(1.35) translate(-145 -11.0)"><path d="M140.6 6.0h4.4v9.2h-4.4z" fill="#4a9ad8"/><path d="M141.4 7.199999999999999h2.8M141.4 8.799999999999999h2.8M141.4 10.4h2.8" stroke="#cfe6fb" stroke-width=".7"/><path d="M143.6 11.4h6v4h-6z" fill="#8cc3ee"/><path d="M144.6 12.4h4v2h-4z" fill="#4e8fc8"/></g>
<g transform="translate(171.6 11.0) scale(1.3) translate(-171.6 -11.0)"><path d="M168 6.3999999999999995h5.4v7H168z" fill="#9a9a9a"/><path d="M170.4 8.0h5.4v7h-5.4z" fill="#cfcfcf"/><path d="M171.4 9.4h3.4M171.4 11.2h3.4M171.4 13.0h3.4" stroke="#777" stroke-width=".7"/><path d="M166.6 9.6h3v4h-3z" fill="#bdbdbd"/></g>
<rect x="186.7" y="0" width="25.3" height="21.6" fill="#3b4048"/>
<g transform="translate(199.4 11.0) scale(1.18) translate(-199.4 -11.0)"><path d="M195.6 7.6q0-1.4 2.6-1.4t2.6 1.4v5.6q0 1.4-2.6 1.4t-2.6-1.4z" fill="#f2c83a"/><ellipse cx="198.2" cy="7.699999999999999" rx="2.6" ry="1.1" fill="#fbe38a"/><path d="M199.4 15.2l4.4-5.2.9.8-4.3 5.2z" fill="#8c4bb8"/><path d="M200.4 10.0l3.6 4.8-.9.7-3.6-4.8z" fill="#9b59c6"/><path d="M202.2 6.199999999999999l2 1.2-1.4 1.6" fill="none" stroke="#5cb85c" stroke-width=".9"/><circle cx="196.4" cy="15.2" r="1.1" fill="#78b82a"/></g>
<g transform="translate(226 10.6) scale(1.25) translate(-226 -10.6)"><path d="M222 6.199999999999999h8.6v5H222z" fill="#f2f2f2"/><path d="M222 6.199999999999999h8.6v1.4H222z" fill="#c9d3e6"/><path d="M221 10.2q4.6-2.6 9.6 0l.6 4.2q-5.4 1.8-10.8 0z" fill="#d4232b"/><path d="M224.4 10.0q1.6-2 3.2 0" fill="none" stroke="#8c1218" stroke-width=".9"/><path d="M221 12.2h10.2" stroke="#8c1218" stroke-width=".6"/></g>
<rect x="134.6" y="20.4" width="22.0" height="1.2" fill="#86b7e3"/>
<rect x="161.5" y="20.4" width="21.9" height="1.2" fill="#86b7e3"/>
<rect x="186.7" y="20.4" width="25.3" height="1.2" fill="#9cc6ec"/>
<rect x="214.3" y="20.4" width="22.0" height="1.2" fill="#86b7e3"/>
<path d="M683.6 11.6l2.4-2.6 2.4 2.6" fill="none" stroke="#fff" stroke-width=".8"/>
<path d="M695.4 7.3999999999999995h6.4v4.8h-6.4z" fill="none" stroke="#fff" stroke-width=".8"/><path d="M696.4 13.6h3" stroke="#fff" stroke-width=".7"/><path d="M699.4 10.799999999999999l2.6 4.2h-5.2z" fill="#f5c518"/>
<path d="M707 9.6h1.4l1.8-1.6v5.6l-1.8-1.6H707z" fill="none" stroke="#fff" stroke-width=".7"/><circle cx="713.4" cy="12.2" r="1.9" fill="#e5343c"/>
<path d="M778 6.199999999999999h8.4v6.2h-4.4l-2.2 2.2v-2.2H778z" fill="#fff"/><circle cx="785.6" cy="13.399999999999999" r="3" fill="#0f1621" stroke="#fff" stroke-width=".7"/><path d="M796.6 0v21.6" stroke="#4a4f58" stroke-width=".6"/>
</svg>
<div class="t" style="left:719.6px;top:484px;font-size:8.4px;color:#fff;font-weight:500">英</div>
<div class="t" style="left:741.9px;top:479.2px;font-size:6.8px;color:#fff">13:41</div>
<div class="t" style="left:732.4px;top:488.7px;font-size:7.15px;color:#fff">2024/10/30</div>
<div class="t" style="left:784.2px;top:486.8px;font-size:5px;color:#fff;font-weight:bold">2</div>
<div class="menu" style="left:44.2px;top:129.7px;width:131.8px;height:156.0px;background:#f0f0f3;clip-path:polygon(13.5px -2px,calc(100% + 4px) -2px,calc(100% + 4px) calc(100% + 4px),-2px calc(100% + 4px),-2px 2.3px,13.5px 2.3px)">
<div class="gut" style="width:8.8px;background:linear-gradient(90deg,#dde1ee,#c5cce2)"></div>
<div class="t" style="left:12.2px;top:-0.55px">新建数据库(N)...</div>
<div class="t" style="left:12.2px;top:9.55px">新建查询(Q)</div>
<div class="t" style="left:12.2px;top:19.65px">编写数据库脚本为(S)</div>
<div class="arr" style="left:125.6px;top:23.05px"></div>
<div class="ms" style="left:10.8px;top:30.50px;background:#cdd0d9"></div>
<div style="left:0.8px;top:31.40px;width:129.20000000000002px;height:10.70px;background:#fdf4c1;border:0.6px solid #e8cf7e"></div>
<div class="t" style="left:12.2px;top:31.75px">任务(T)</div>
<div class="arr" style="left:125.6px;top:35.15px"></div>
<div class="ms" style="left:10.8px;top:42.60px;background:#cdd0d9"></div>
<div class="t" style="left:12.2px;top:43.85px">策略(O)</div>
<div class="arr" style="left:125.6px;top:47.25px"></div>
<div class="t" style="left:12.2px;top:53.95px">Facets(A)</div>
<div class="ms" style="left:10.8px;top:64.80px;background:#cdd0d9"></div>
<div class="t" style="left:12.2px;top:66.05px">启动 PowerShell(H)</div>
<div class="t" style="left:12.2px;top:76.15px">Azure Data Studio (A)</div>
<div class="arr" style="left:125.6px;top:79.55px"></div>
<div class="ms" style="left:10.8px;top:87.00px;background:#cdd0d9"></div>
<div class="t" style="left:12.2px;top:88.25px">Azure SQL Managed Instance link</div>
<div class="arr" style="left:125.6px;top:91.65px"></div>
<div class="ms" style="left:10.8px;top:99.10px;background:#cdd0d9"></div>
<div class="t" style="left:12.2px;top:100.35px">报表(P)</div>
<div class="arr" style="left:125.6px;top:103.75px"></div>
<div class="ms" style="left:10.8px;top:111.20px;background:#cdd0d9"></div>
<div class="t" style="left:12.2px;top:112.45px">重命名(M)</div>
<div class="t" style="left:12.2px;top:122.55px">删除(D)</div>
<div class="ms" style="left:10.8px;top:133.40px;background:#cdd0d9"></div>
<div class="t" style="left:12.2px;top:134.65px">刷新(F)</div>
<div class="t" style="left:12.2px;top:144.75px">属性(R)</div>
</div>
<div class="menu" style="left:175.6px;top:162.0px;width:176.6px;height:293.3px;background:#ebeef7;">
<div class="gut" style="width:13.2px;background:linear-gradient(90deg,#dde1ee,#c5cce2)"></div>
<div class="t" style="left:16.6px;top:0.72px">分离(D)...</div>
<div class="ms" style="left:15.2px;top:11.98px;background:#d9dce7"></div>
<div class="t" style="left:16.6px;top:13.65px">脱机(T)</div>
<div class="t dis" style="left:16.6px;top:24.28px">联机(F)</div>
<div class="ms" style="left:15.2px;top:35.54px;background:#d9dce7"></div>
<div class="t" style="left:16.6px;top:37.20px">加密列...</div>
<div class="ms" style="left:15.2px;top:48.47px;background:#d9dce7"></div>
<div class="t" style="left:16.6px;top:50.13px">数据发现和分类(Y)</div>
<div class="arr" style="left:170.2px;top:53.53px"></div>
<div class="ms" style="left:15.2px;top:61.40px;background:#d9dce7"></div>
<div class="t" style="left:16.6px;top:63.07px">收缩(S)</div>
<div class="arr" style="left:170.2px;top:66.47px"></div>
<div class="ms" style="left:15.2px;top:74.33px;background:#d9dce7"></div>
<div class="t" style="left:16.6px;top:76.00px">备份(B)...</div>
<div class="t" style="left:16.6px;top:86.62px">还原(R)</div>
<div class="arr" style="left:170.2px;top:90.02px"></div>
<div class="ms" style="left:15.2px;top:97.89px;background:#d9dce7"></div>
<div class="t" style="left:16.6px;top:99.55px">镜像(M)...</div>
<div class="t" style="left:16.6px;top:110.18px">启动数据库镜像监视器(O)...</div>
<div class="t" style="left:16.6px;top:120.81px">传送事务日志(L)...</div>
<div class="ms" style="left:15.2px;top:132.08px;background:#d9dce7"></div>
<div class="t" style="left:16.6px;top:133.75px">生成脚本(E)...</div>
<div class="t" style="left:16.6px;top:144.38px">生成内存中 OLTP 迁移清单(G)</div>
<div class="ms" style="left:15.2px;top:155.64px;background:#d9dce7"></div>
<div class="t" style="left:16.6px;top:157.31px">提取数据层应用程序(X)...</div>
<div class="t" style="left:16.6px;top:167.94px">将数据库部署到 Microsoft Azure SQL 数据库(A)...</div>
<div class="t" style="left:16.6px;top:178.56px">导出数据层应用程序(N)...</div>
<div class="t" style="left:16.6px;top:189.19px">注册为数据层应用程序(R)...</div>
<div class="t" style="left:16.6px;top:199.82px">升级数据层应用程序(U)...</div>
<div class="t dis" style="left:16.6px;top:210.45px">删除数据层应用程序(E)...</div>
<div class="ms" style="left:15.2px;top:221.72px;background:#d9dce7"></div>
<div class="t" style="left:16.6px;top:223.38px">导入平面文件(F)...</div>
<div class="t" style="left:16.6px;top:234.01px">导入数据(I)...</div>
<div class="t" style="left:16.6px;top:244.64px">导出数据(X)...</div>
<div class="t" style="left:16.6px;top:255.28px">复制数据库(C)...</div>
<div class="ms" style="left:15.2px;top:266.54px;background:#d9dce7"></div>
<div class="t" style="left:16.6px;top:268.20px">管理数据库加密(P)...</div>
<div class="ms" style="left:15.2px;top:279.47px;background:#d9dce7"></div>
<div class="t" style="left:16.6px;top:281.13px">数据库升级(P)</div>
<div class="arr" style="left:170.2px;top:284.54px"></div>
</div>
<svg style="left:0;top:0" width="800" height="500" viewBox="0 0 800 500">
<g fill="none" stroke="#d4222e" stroke-width="1.3">
<rect x="31" y="124.2" width="26.6" height="8.9"/>
<rect x="51" y="161.8" width="27.4" height="10.4"/>
<rect x="190.2" y="236.2" width="34.4" height="11.2"/>
</g>
<path d="M102.7 92.2L59.8 120.3L60.1 118.2L54.6 125.2L63.2 122.7L61.0 122.2L103.3 93.0z" fill="#e81e25" stroke="#e81e25" stroke-width=".3" stroke-linejoin="round"/>
<path d="M131.5 146.6L84.9 164.8L85.7 162.8L78.8 168.5L87.7 167.8L85.7 166.9L131.9 147.4z" fill="#e81e25" stroke="#e81e25" stroke-width=".3" stroke-linejoin="round"/>
<path d="M289.8 208.6L226.4 234.8L227.2 232.8L220.4 238.6L229.3 237.8L227.3 236.9L290.2 209.4z" fill="#e81e25" stroke="#e81e25" stroke-width=".3" stroke-linejoin="round"/>
</svg>
</div>
</body>
</html>
